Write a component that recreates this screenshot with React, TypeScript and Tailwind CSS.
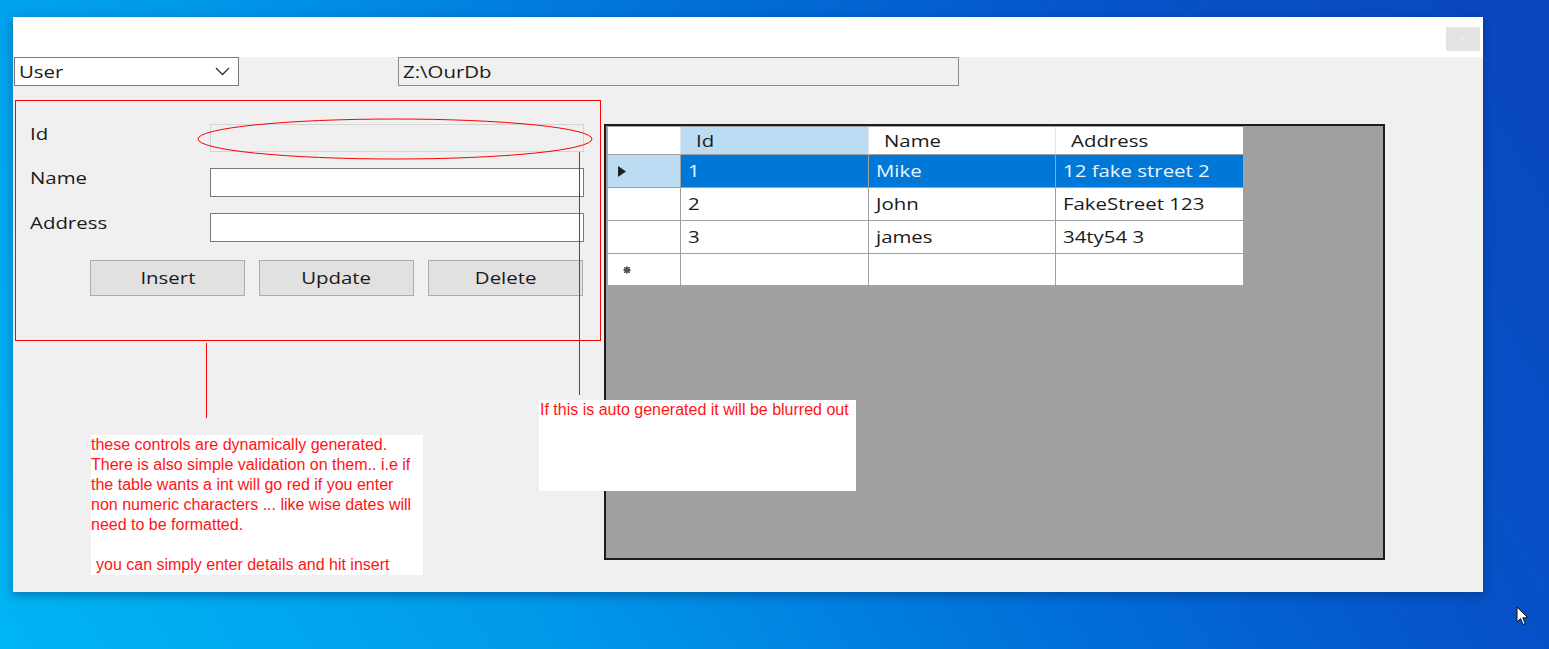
import React from "react";

const ui = "font-['Open_Sans','Noto_Sans',sans-serif] font-medium";
const note = "font-['Liberation_Sans',Arial,sans-serif] font-normal";

function S({ children, c = "" }: { children: React.ReactNode; c?: string }) {
  return <span className={`inline-block origin-left scale-x-120 whitespace-pre ${c}`}>{children}</span>;
}

function Field({ label, disabled }: { label: string; disabled?: boolean }) {
  return (
    <div className="flex items-start">
      <div className="w-[194px] pl-[14px] -mt-[2px] h-[23px] leading-[23px] text-[17px] text-[#1a1a1a]">
        <S>{label}</S>
      </div>
      <div
        className={
          disabled
            ? "w-[374px] h-[28px] border border-[#d4d4d4] bg-[#f0f0f0]"
            : "w-[374px] h-[29px] border border-[#7a7a7a] bg-white"
        }
      />
    </div>
  );
}

function Btn({ label }: { label: string }) {
  return (
    <div className="w-[155px] h-[36px] border border-[#adadad] bg-[#e1e1e1] flex items-center justify-center text-[17px] text-[#1a1a1a]">
      <span className="inline-block origin-center scale-x-120">{label}</span>
    </div>
  );
}

const cols = "grid grid-cols-[73px_188px_187px_187px]";

function Cell({
  children,
  c = "",
}: {
  children?: React.ReactNode;
  c?: string;
}) {
  return <div className={`flex items-center pl-[7px] text-[17px] ${c}`}>{children}</div>;
}

export default function App() {
  const rows = [
    ["2", "John", "FakeStreet 123"],
    ["3", "james", "34ty54 3"],
  ];
  return (
    <div className="relative min-h-[649px] w-full overflow-hidden bg-[linear-gradient(60deg,#00b6f4_0%,#0098ea_30%,#0070d8_55%,#0652c8_78%,#0a46bc_100%)] pt-[17px] pl-[13px]">
      <div className={`w-[1470px] h-[575px] flex flex-col shadow-[0_3px_10px_rgba(0,40,90,0.45)] ${ui}`}>
        {/* title bar */}
        <div className="h-[40px] bg-white flex justify-end items-start pt-[10px] pr-[3px]">
          <div className="w-[34px] h-[24px] bg-[#e3e3e3] flex items-center justify-center text-[12px] leading-none text-[#f4f4f4]">
            ×
          </div>
        </div>
        {/* body */}
        <div className="relative flex-1 bg-[#f0f0f0]">
          <div className="flex items-start pl-[1px]">
            <div className="w-[225px] h-[29px] border border-[#7a7a7a] bg-white flex items-center justify-between pl-[4px] pr-[8px] text-[17px] text-[#1a1a1a]">
              <S>User</S>
              <svg width="15" height="9" viewBox="0 0 15 9">
                <polyline points="1,1 7.5,7.5 14,1" fill="none" stroke="#333" strokeWidth="1.3" />
              </svg>
            </div>
            <div className="ml-[159px] w-[561px] h-[29px] border border-[#8a8a8a] bg-[#f0f0f0] flex items-center pl-[4px] text-[17px] text-[#1a1a1a]">
              <S>Z:\OurDb</S>
            </div>
          </div>

          <div className="flex items-start mt-[14px] pl-[2px]">
            {/* form panel */}
            <div className="w-[586px] h-[241px] border border-[#ff0000] flex flex-col pt-[23px]">
              <div className="flex flex-col gap-[16px]">
                <Field label="Id" disabled />
                <Field label="Name" />
                <Field label="Address" />
              </div>
              <div className="flex gap-[14px] mt-[18px] pl-[74px]">
                <Btn label="Insert" />
                <Btn label="Update" />
                <Btn label="Delete" />
              </div>
            </div>

            {/* grid */}
            <div className="ml-[3px] mt-[24px] w-[781px] h-[436px] border-2 border-[#1c1c1c] bg-[#a0a0a0] pt-[1px] pl-[2px]">
              <div className="w-[635px] text-[#1a1a1a]">
                <div className={`${cols} h-[27px]`}>
                  <div className="bg-white border-r border-[#e4e4e4]" />
                  <div className="bg-[#bcdcf4] flex items-center pl-[15px] text-[17px] border-r border-[#e4e4e4]">
                    <S>Id</S>
                  </div>
                  <div className="bg-white flex items-center pl-[15px] text-[17px] border-r border-[#e4e4e4]">
                    <S>Name</S>
                  </div>
                  <div className="bg-white flex items-center pl-[15px] text-[17px]">
                    <S>Address</S>
                  </div>
                </div>
                <div className={`${cols} h-[33px] border-t border-[#a0a0a0]`}>
                  <div className="bg-[#bcdcf4] flex items-center pl-[10px] border-r border-[#a0a0a0]">
                    <svg width="8" height="11" viewBox="0 0 8 11">
                      <polygon points="0,0 8,5.5 0,11" fill="#222" />
                    </svg>
                  </div>
                  <Cell c="bg-[#0078d7] text-[#eaf4ff] border-r border-[#a0a0a0]"><S>1</S></Cell>
                  <Cell c="bg-[#0078d7] text-[#eaf4ff] border-r border-[#a0a0a0]"><S>Mike</S></Cell>
                  <Cell c="bg-[#0078d7] text-[#eaf4ff]"><S>12 fake street 2</S></Cell>
                </div>
                {rows.map((r) => (
                  <div key={r[0]} className={`${cols} h-[33px] border-t border-[#a0a0a0]`}>
                    <div className="bg-white border-r border-[#a0a0a0]" />
                    <Cell c="bg-white border-r border-[#a0a0a0]"><S>{r[0]}</S></Cell>
                    <Cell c="bg-white border-r border-[#a0a0a0]"><S>{r[1]}</S></Cell>
                    <Cell c="bg-white"><S>{r[2]}</S></Cell>
                  </div>
                ))}
                <div className={`${cols} h-[32px] border-t border-[#a0a0a0]`}>
                  <div className="bg-white border-r border-[#a0a0a0] flex items-center pl-[15px]">
                    <svg width="8" height="8" viewBox="0 0 8 8">
                      <circle cx="4" cy="4" r="3" fill="#555" />
                      <path d="M4 0V8M0 4H8M1 1L7 7M7 1L1 7" stroke="#555" strokeWidth="1" />
                    </svg>
                  </div>
                  <div className="bg-white border-r border-[#a0a0a0]" />
                  <div className="bg-white border-r border-[#a0a0a0]" />
                  <div className="bg-white" />
                </div>
              </div>
            </div>
          </div>

          {/* annotations */}
          <svg className="absolute left-[183px] top-[61px]" width="398" height="44" viewBox="0 0 398 44">
            <ellipse cx="199" cy="21" rx="197" ry="20" fill="none" stroke="#ff0000" strokeWidth="1" />
          </svg>
          <div className="absolute left-[566px] top-[95px] w-px h-[243px] bg-[#ff0000]" />
          <div className="absolute left-[193px] top-[286px] w-px h-[75px] bg-[#ff0000]" />

          <div className={`absolute left-[78px] top-[378px] w-[332px] h-[140px] bg-white text-[16px] leading-[20px] text-[#ff1414] ${note}`}>
            <div>these controls are dynamically generated.</div>
            <div>There is also simple validation on them.. i.e if</div>
            <div>the table wants a int will go red if you enter</div>
            <div>non numeric characters ... like wise dates will</div>
            <div>need to be formatted.</div>
            <div className="h-[20px]" />
            <div className="pl-[5px]">you can simply enter details and hit insert</div>
          </div>

          <div className={`absolute left-[526px] top-[343px] w-[317px] h-[91px] bg-white text-[16px] leading-[20px] text-[#ff1414] pl-[1px] ${note}`}>
            If this is auto generated it will be blurred out
          </div>
        </div>
      </div>

      {/* mouse cursor */}
      <svg className="absolute left-[1516px] top-[606px]" width="14" height="21" viewBox="0 0 14 21">
        <path d="M1 1 L1 16 L4.5 12.5 L7 18.5 L9.2 17.6 L6.8 11.8 L11.8 11.8 Z" fill="#ffffff" stroke="#111" strokeWidth="1" strokeLinejoin="round" />
      </svg>
    </div>
  );
}
